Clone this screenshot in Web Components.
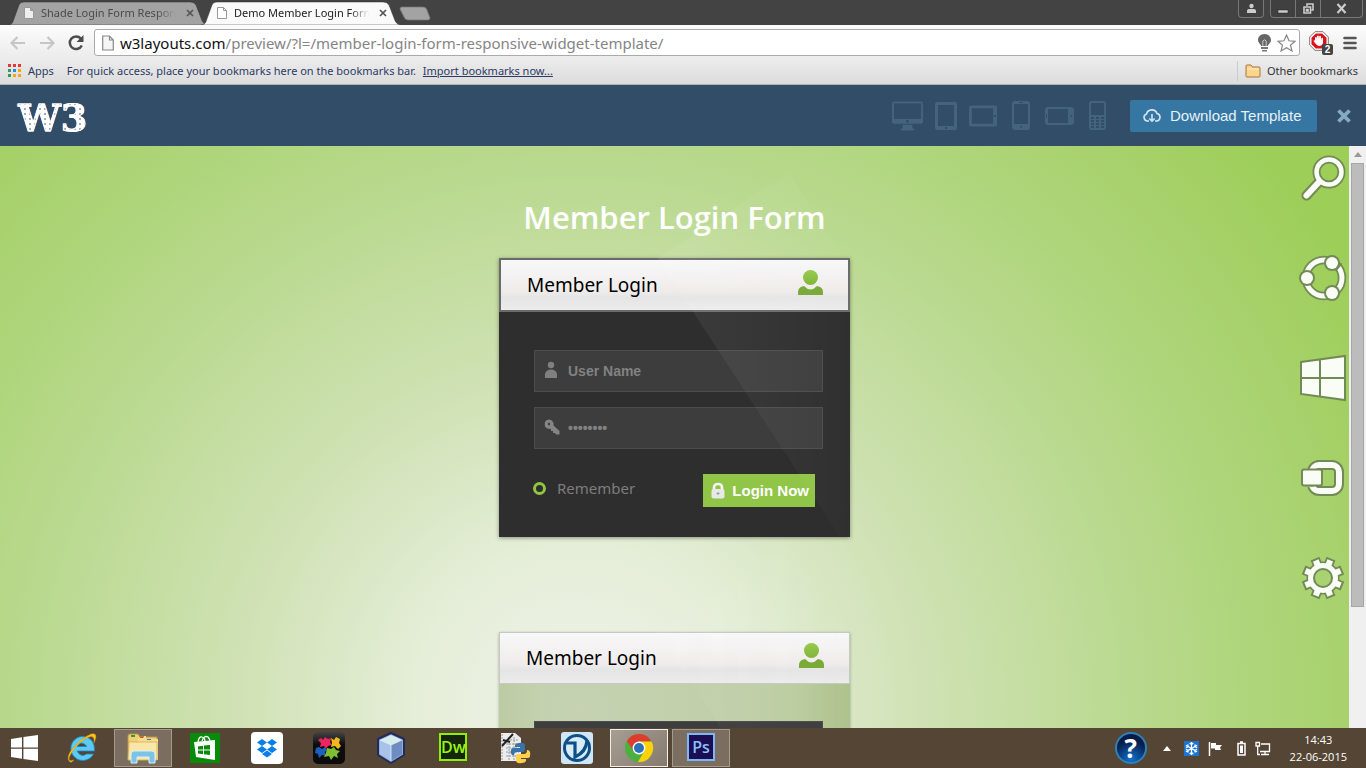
<!DOCTYPE html>
<html lang="en">
<head>
<meta charset="utf-8">
<title>Demo Member Login Form</title>
<style>
html, body { margin: 0; height: 100%; overflow: hidden; }
body { font-family: "Open Sans", "Noto Sans", sans-serif; font-size: 12px; color: #222; }
</style>
</head>
<body>
<desktop-screen></desktop-screen>
<script>
const define = (name, css, html) => {
  const t = document.createElement('template');
  t.innerHTML = `<style>*{box-sizing:border-box}svg{display:block;flex:none}button{font:inherit;border:0;padding:0;margin:0;background:none;color:inherit}a{color:inherit}${css}</style>${html}`;
  customElements.define(name, class extends HTMLElement {
    constructor() {
      super();
      this.attachShadow({ mode: 'open' }).append(t.content.cloneNode(true));
    }
  });
};

define('browser-tab', `
:host { display: flex; position: relative; width: 200px; height: 24px; margin-right: -7px; align-items: center; padding: 0 10px 0 15px; gap: 6px; color: #4a4a4a; --fill: #a3a3a3; --page: #eee; }
:host([active]) { color: #222; --fill: #fafafa; --page: #fff; z-index: 1; }
.shape { position: absolute; inset: 0; width: 100%; height: 100%; }
.shape path { fill: var(--fill); }
.icon, .label, button { position: relative; }
.label { flex: 1; min-width: 0; overflow: hidden; white-space: nowrap; font: 11px/18px "Noto Sans", sans-serif; -webkit-mask-image: linear-gradient(90deg,#000 86%,transparent); mask-image: linear-gradient(90deg,#000 86%,transparent); }
button { width: 16px; height: 16px; display: grid; place-items: center; }
`, `
<svg class="shape" viewBox="0 0 200 24" preserveAspectRatio="none"><path d="M0 24C5 24 5 20 7 15L11 4Q12 1 16 1H182Q186 1 188 4L193 17Q195 24 200 24Z" stroke="#333" stroke-width=".5"/></svg>
<svg class="icon" width="12" height="14" viewBox="0 0 12 14"><path d="M1.500 1.500H7.500L10.500 4.500V12.500H1.500ZM7.500 1.500V4.500H10.500" style="fill:var(--page)" stroke="#999"/></svg>
<span class="label"><slot></slot></span>
<button aria-label="Close tab"><svg width="8" height="8" viewBox="0 0 8 8"><path d="M1 1L7 7M7 1L1 7" stroke="#555" stroke-width="1.700"/></svg></button>
`);

define('tab-strip', `
:host { display: flex; height: 25px; background: #434343; padding-left: 8px; justify-content: space-between; align-items: flex-start; }
.tabs, .controls, .group { display: flex; }
.tabs { padding-top: 1px; }
.new { width: 32px; height: 15px; margin: 5px 0 0 5px; }
.controls { gap: 6px; padding-right: 3px; }
.group { border: 1px solid #777; border-top: 0; border-radius: 0 0 4px 4px; height: 18px; background: #404040; }
.group button { width: 24px; display: grid; place-items: center; }
.group button + button { border-left: 1px solid #777; width: 25px; }
.group .wide.wide { width: 42px; }
`, `
<div class="tabs">
<browser-tab>Shade Login Form Respon</browser-tab>
<browser-tab active>Demo Member Login Form</browser-tab>
<button class="new" aria-label="New tab"><svg width="32" height="15" viewBox="0 0 32 15"><path d="M3 1H24Q27 1 28 4L31 12Q31 14 29 14H9Q6 14 5 11L1 3Q1 1 3 1Z" fill="#a3a3a3" stroke="#777" stroke-width=".7"/></svg></button>
</div>
<div class="controls">
<div class="group"><button aria-label="Profile"><svg width="11" height="11" viewBox="0 0 11 11"><circle cx="5.500" cy="3" r="2.200" fill="#ccc"/><path d="M1 10V8Q1 6 3 6H8Q10 6 10 8V10Z" fill="#ccc"/></svg></button></div>
<div class="group">
<button aria-label="Minimize"><svg width="12" height="12" viewBox="0 0 12 12"><rect x="1" y="7" width="10" height="3" fill="#ccc" stroke="#222" stroke-width=".5"/></svg></button>
<button aria-label="Restore"><svg width="13" height="13" viewBox="0 0 13 13"><path d="M5 4V2H11V8H9.500M2 5H8.500V11H2ZM4.500 7.500H6V9H4.500Z" fill="none" stroke="#ccc" stroke-width="1.600"/></svg></button>
<button class="wide" aria-label="Close"><svg width="11" height="11" viewBox="0 0 11 11"><path d="M1.500 1L9.500 10M9.500 1L1.500 10" stroke="#ccc" stroke-width="2.200"/></svg></button>
</div></div>
`);

define('address-bar', `
:host { display: flex; height: 35px; align-items: center; padding: 0 9px 0 10px; background: linear-gradient(#fcfcfc,#ebebeb); }
.nav { display: flex; gap: 13px; }
.box { flex: 1; display: flex; align-items: center; gap: 6px; height: 27px; border: 1px solid #aaa; border-radius: 3px; background: #fff; padding: 0 3px 0 7px; margin: 0 9px 0 10px; }
.url { flex: 1; font: 15px/22px "Noto Sans", sans-serif; color: #858585; text-decoration: none; white-space: nowrap; }
.url b { font-weight: 400; color: #111; }
.badge { position: relative; width: 24px; height: 24px; }
.badge span { position: absolute; right: 0; bottom: 0; width: 11px; height: 11px; background: #444; color: #fff; font: bold 10px/11px "Liberation Sans", sans-serif; text-align: center; border-radius: 2px; }
.tools { display: flex; gap: 10px; align-items: center; }
`, `
<div class="nav">
<button aria-label="Back"><svg width="16" height="16" viewBox="0 0 16 16"><path d="M15 8H2M7.500 2L1.500 8L7.500 14" fill="none" stroke="#c6c6c6" stroke-width="2.200"/></svg></button>
<button aria-label="Forward"><svg width="16" height="16" viewBox="0 0 16 16"><path d="M1 8H14M8.500 2L14.500 8L8.500 14" fill="none" stroke="#c6c6c6" stroke-width="2.200"/></svg></button>
<button aria-label="Reload"><svg width="16" height="16" viewBox="0 0 16 16"><path d="M12.800 3.500A6.300 6.300 0 1 0 13.800 10.500" fill="none" stroke="#4c4c4c" stroke-width="2.500"/><path d="M15.500 0V7H8.500Z" fill="#4c4c4c"/></svg></button>
</div>
<div class="box">
<svg width="12" height="16" viewBox="0 0 12 16"><path d="M.7 1H7.500L11.300 5V15H.7ZM7.500 1V5H11.300" fill="#f5f5f5" stroke="#888" stroke-width="1.200"/></svg>
<a class="url" href="#"><b>w3layouts.com</b>/preview/?l=/member-login-form-responsive-widget-template/</a>
<svg width="13" height="18" viewBox="0 0 13 18"><path d="M6.500 0C2.500 0 0 3 0 6C0 9 3 10 3 12H10C10 10 13 9 13 6C13 3 10.500 0 6.500 0Z" fill="#666"/><path d="M4.800 12V7Q6.500 4.500 8.200 7V12" fill="none" stroke="#ccc"/><path d="M3 13H10V15H3ZM4 16H9V17.500H4Z" fill="#777"/></svg>
<svg width="19" height="18" viewBox="0 0 19 18"><path d="M9.500 1L12 6.800L18 7.300L13.500 11.200L15 17L9.500 13.800L4 17L5.500 11.200L1 7.300L7 6.800Z" fill="#fff" stroke="#888" stroke-width="1.200"/></svg>
</div>
<div class="tools">
<div class="badge"><svg width="20" height="20" viewBox="0 0 20 20"><path d="M6 .7H14L19.300 6V14L14 19.300H6L.7 14V6Z" fill="#fff" stroke="#777"/><path d="M6.800 2.500H13.200L17.500 6.800V13.200L13.200 17.500H6.800L2.500 13.200V6.800Z" fill="#d9141c"/><path d="M6 9.500V6.500Q7 5.500 7.700 6.500V9L8 5Q9 4 9.800 5V8.500L10.300 5Q11.500 4.500 12 5.500V9L12.500 7Q13.500 6.500 14 7.500V12Q13 15 10 15Q8 15 6 12L4.500 10Q5 9 6 9.500Z" fill="#fff"/></svg><span>2</span></div>
<button aria-label="Menu"><svg width="14" height="14" viewBox="0 0 14 14"><path d="M1.500 2H12.500M1.500 7H12.500M1.500 12H12.500" stroke="#555" stroke-width="2.600" stroke-linecap="round"/></svg></button>
</div>
`);

define('bookmarks-bar', `
:host { display: flex; height: 25px; align-items: center; padding: 0 8px 3px; gap: 13px; background: linear-gradient(#ebebeb,#dcdcdc); border-bottom: 1px solid #b3b3b3; color: #2b3a63; font: 11px/16px "Noto Sans", sans-serif; white-space: nowrap; }
.item { display: flex; gap: 7px; align-items: center; text-decoration: none; }
.hint { flex: 1; }
.hint a { margin-left: 4px; }
.other { border-left: 1px solid #c2cdd9; padding-left: 7px; color: #333; height: 20px; gap: 6px; }
`, `
<a class="item" href="#"><svg width="13" height="13" viewBox="0 0 13 13"><g fill="#e53935"><path d="M0 0h3v3H0zM5 0h3v3H5zM10 0h3v3h-3z"/></g><path d="M0 5h3v3H0zM0 10h3v3H0z" fill="#28a058"/><path d="M5 5h3v3H5z" fill="#2f86f3"/><path d="M10 5h3v3h-3zM5 10h3v3H5zM10 10h3v3h-3z" fill="#f6a70b"/></svg>Apps</a>
<div class="hint">For quick access, place your bookmarks here on the bookmarks bar. <a href="#">Import bookmarks now...</a></div>
<a class="item other" href="#"><svg width="16" height="14" viewBox="0 0 16 14"><path d="M1 3V2Q1 1 2 1H6L7.500 3H14Q15 3 15 4V12Q15 13 14 13H2Q1 13 1 12Z" fill="#fbd58c" stroke="#a8743a"/><path d="M2 5H14" stroke="#fff0c4"/></svg>Other bookmarks</a>
`);

define('preview-bar', `
:host { display: flex; height: 61px; align-items: center; background: #324d67; padding: 0 14px 0 18px; color: #44637d; }
.logo { margin-right: auto; text-decoration: none; font: bold 38px/44px "DejaVu Serif", serif; color: transparent; background: radial-gradient(circle at 2px 2px,#9fadba 0 1px,transparent 1px) 0 0/5px 5px, #fff; -webkit-background-clip: text; background-clip: text; padding-top: 4px; -webkit-text-stroke: 1px #fff; }
.devices { display: flex; gap: 12px; align-items: center; margin-right: 24px; }
.dl { display: flex; align-items: center; gap: 9px; width: 187px; height: 32px; padding-left: 13px; background: #3576a3; border-radius: 2px; color: #e6f1f8; font: 15px/20px "Liberation Sans", sans-serif; text-decoration: none; margin-right: 19px; }
svg { fill: currentColor; }
.hole { fill: #324d67; }
.phone { margin-left: 3px; }
`, `
<a class="logo" href="#">W3</a>
<div class="devices">
<svg width="31" height="30" viewBox="0 0 32 30"><rect width="32" height="23" rx="2"/><rect class="hole" x="2" y="2" width="28" height="16"/><circle class="hole" cx="16" cy="20.500" r="1.500"/><path d="M11 24H21V28H23V30H9V28H11Z"/></svg>
<svg width="22" height="28" viewBox="0 0 22 28"><rect width="22" height="28" rx="2"/><rect class="hole" x="3" y="3" width="16" height="21"/><rect class="hole" x="10" y="25" width="2" height="2"/></svg>
<svg width="28" height="22" viewBox="0 0 29 22"><rect width="29" height="22" rx="2"/><rect class="hole" x="3" y="3" width="22" height="16"/><rect class="hole" x="26" y="10" width="2" height="2"/></svg>
<svg class="phone" width="18" height="29" viewBox="0 0 18 29"><rect width="18" height="29" rx="3"/><rect class="hole" x="2" y="3" width="14" height="20"/><rect class="hole" x="7" y="1" width="4" height="1"/><circle class="hole" cx="9" cy="26" r="1"/></svg>
<svg class="phone" width="29" height="18" viewBox="0 0 29 18"><rect width="29" height="18" rx="3"/><rect class="hole" x="3" y="2" width="20" height="14"/><rect class="hole" x="1" y="7" width="1" height="4"/><circle class="hole" cx="26" cy="9" r="1"/></svg>
<svg class="phone" width="17" height="29" viewBox="0 0 17 29"><rect width="17" height="29" rx="3"/><rect class="hole" x="2" y="2" width="13" height="12"/><path class="hole" d="M2 16h3v2H2zM7 16h3v2H7zM12 16h3v2h-3zM2 19h3v2H2zM7 19h3v2H7zM12 19h3v2h-3zM2 22h3v2H2zM7 22h3v2H7zM12 22h3v2h-3zM2 25h3v2H2zM7 25h3v2H7zM12 25h3v2h-3z"/></svg>
</div>
<a class="dl" href="#"><svg width="18" height="15" viewBox="0 0 18 15" style="fill:none;stroke:#d5e6f2;stroke-width:1.600"><path d="M6 13H4.500A3.600 3.600 0 0 1 3.500 6A5.500 5.500 0 0 1 14 5.500A3.800 3.800 0 0 1 13.500 13H12"/><path d="M9 6V13M6.300 10.500L9 13.200L11.700 10.500"/></svg>Download Template</a>
<button aria-label="Close preview"><svg width="16" height="16" viewBox="0 0 16 16"><path d="M2.500 2.500L13.500 13.500M13.500 2.500L2.500 13.500" stroke="#86aabf" stroke-width="3.800"/></svg></button>
`);

define('login-card', `
:host { display: block; position: relative; width: 351px; box-shadow: 0 1px 4px rgba(0,0,0,.4); --line: #6b6b6b; --lw: 2px; --body: #2e2e2e; }
:host([light]) { --line: #c6c8c4; --lw: 1px; --body: linear-gradient(90deg,rgba(112,142,62,.38),rgba(118,146,72,.34) 12%,rgba(118,146,72,.34) 85%,rgba(112,142,62,.42)); box-shadow: 0 1px 3px rgba(0,0,0,.28); }
header { display: flex; justify-content: space-between; align-items: center; height: 54px; border: var(--lw) solid var(--line); background: linear-gradient(#f8f8f8,#f0ecec 60%,#e5e5e5 75%,#ececec); padding: 0 25px 0 26px; }
:host([light]) header { height: 52px; }
h2 { margin: 0; font: 400 19px/28px "Noto Sans", sans-serif; color: #000; }
header svg { margin-bottom: 4px; }
form { background: var(--body); padding: 38px 27px 30px 35px; display: grid; gap: 15px; }
:host([light]) form { padding-top: 37px; }
.field { display: flex; align-items: center; height: 42px; padding-left: 9px; gap: 8px; background: #3d3d3d; border: 1px solid #4c4c4c; }
.field svg { margin-bottom: 2px; }
.field input { flex: 1; min-width: 0; border: 0; background: none; outline: 0; padding: 0; color: #828282; font: bold 14px/18px "Liberation Sans", sans-serif; }
.row { display: flex; justify-content: space-between; align-items: center; margin-top: 10px; padding-right: 8px; height: 33px; }
:host([light]) .row { visibility: hidden; }
.remember { display: flex; gap: 11px; align-items: center; color: #7d7d7d; font: 15px/20px "Noto Sans", sans-serif; margin-bottom: 5px; }
.remember input { appearance: none; width: 13px; height: 13px; margin: 0 0 0 -1px; border: 3px solid #90c644; border-radius: 50%; }
.go { display: flex; align-items: center; gap: 7px; height: 33px; padding: 0 6px 0 8px; background: #91c548; color: #fff; font: bold 15px/20px "Liberation Sans", sans-serif; white-space: nowrap; }
.shine { position: absolute; left: 0; top: -90px; pointer-events: none; }
:host([light]) .shine { opacity: .6; }
`, `
<header><h2>Member Login</h2>
<svg width="25" height="26" viewBox="0 0 25 26"><defs><linearGradient id="g" x2="0" y2="1"><stop stop-color="#95cb4a"/><stop offset="1" stop-color="#7fb43a"/></linearGradient></defs><circle cx="12.500" cy="7.500" r="7.500" fill="url(#g)"/><path d="M0 25V22Q0 17 6 16Q12.500 23 19 16Q25 17 25 22V25Z" fill="#78a936"/></svg></header>
<form>
<div class="field"><svg width="16" height="18" viewBox="0 0 16 18"><g fill="#808080"><circle cx="7" cy="4" r="3.200"/><path d="M1 17V13Q2 8.500 7 8.500Q12 8.500 13 13V17Z"/></g></svg><input type="text" value="User Name" aria-label="User Name"></div>
<div class="field"><svg width="16" height="16" viewBox="0 0 16 16"><path d="M5 .5A4.700 4.700 0 0 0 4.500 9.800L7 10V12H9V14H11L12 15.500H15.500V12L9.500 6.500A4.800 4.800 0 0 0 5 .5Z" fill="#848484"/><circle cx="5" cy="5" r="1.200" fill="#3d3d3d"/></svg><input type="password" value="password" aria-label="Password"></div>
<div class="row"><label class="remember"><input type="checkbox">Remember</label>
<button class="go" type="button"><svg width="14" height="17" viewBox="0 0 14 17"><path d="M3 8V5.500Q3 2 7 2T11 5.500V8" fill="none" stroke="#f6f6f6" stroke-width="2.600"/><rect x=".5" y="7" width="13" height="9.500" rx="2" fill="#e8e8e8"/><path d="M7 10V13M5.500 11.500H8.500" stroke="#91a97a"/></svg>Login Now</button></div>
</form>
<svg class="shine" width="351" height="369" viewBox="0 0 351 369"><defs><linearGradient id="s" x1="0" x2="1"><stop stop-color="#fff" stop-opacity=".07"/><stop offset="1" stop-color="#fff" stop-opacity="0.010"/></linearGradient></defs><path d="M159 90L290 5L351 100V369H341Z" fill="url(#s)"/></svg>
`);

define('charm-rail', `
:host { display: flex; flex-direction: column; gap: 52px; position: absolute; right: 2px; top: 8px; }
.o { fill: none; stroke: #728a55; stroke-linecap: round; } .w { fill: none; stroke: #fafcf6; stroke-linecap: round; }
.of { fill: #728a55; } .wf { fill: #fafcf6; }
`, `
<button aria-label="Search"><svg width="48" height="48" viewBox="0 0 48 48"><circle class="o" cx="30" cy="18" r="12.500" stroke-width="8"/><path class="o" d="M20 28L7.500 41.500" stroke-width="10"/><path class="w" d="M20 28L7.500 41.500" stroke-width="6"/><circle class="w" cx="30" cy="18" r="12.500" stroke-width="4.500"/></svg></button>
<button aria-label="Share"><svg width="48" height="48" viewBox="0 0 48 48"><circle class="o" cx="25" cy="24" r="18" stroke-width="8.500"/><circle class="w" cx="25" cy="24" r="18" stroke-width="5"/><g class="of"><circle cx="8" cy="24" r="8"/><circle cx="33" cy="9" r="8"/><circle cx="33" cy="39" r="8"/></g><path class="o" d="M37 16L42 10" stroke-width="2"/><g class="wf"><circle cx="8" cy="24" r="6"/><circle cx="33" cy="9" r="6"/><circle cx="33" cy="39" r="6"/></g></svg></button>
<button aria-label="Start"><svg width="48" height="48" viewBox="0 0 48 48"><path d="M2 8L46 2V46L2 40ZM21 5V43M2 24H46" fill="#fafcf6" stroke="#728a55" stroke-width="2"/></svg></button>
<button aria-label="Devices"><svg width="48" height="48" viewBox="0 0 48 48"><rect class="o" x="13" y="11" width="27" height="26" rx="7" stroke-width="10"/><rect class="w" x="13" y="11" width="27" height="26" rx="7" stroke-width="6"/><path d="M7 15H15V33H7Z" fill="#a9d271"/><rect x="3" y="15.500" width="20" height="16" rx="2" fill="#fafcf6" stroke="#728a55" stroke-width="2"/></svg></button>
<button aria-label="Settings"><svg width="48" height="48" viewBox="0 0 48 48"><g transform="rotate(22.500 24 24)"><path d="M24 3V45M3 24H45M9.200 9.200L38.800 38.800M38.800 9.200L9.200 38.800" stroke="#728a55" stroke-width="9.500"/><circle class="of" cx="24" cy="24" r="16.500"/><path d="M24 5V43M5 24H43M10.600 10.600L37.400 37.400M37.400 10.600L10.600 37.400" stroke="#fafcf6" stroke-width="6"/></g><circle class="wf" cx="24" cy="24" r="15"/><circle cx="24" cy="24" r="9" fill="#a9d271" stroke="#728a55" stroke-width="2"/></svg></button>
`);

define('page-view', `
:host { display: flex; flex: 1; min-height: 0; }
main { position: relative; flex: 1; overflow: hidden; display: flex; flex-direction: column; align-items: center; padding-top: 49px;
 background: radial-gradient(ellipse 56% 128% at 43% 97%,#eff3e9 0,#e5eed8 22%,#d0e2b5 45%,#bcda93 70%,#b0d67e 86%,#a9d26f 100%,#9dce58 118%); }
h1 { margin: 0 0 19px; font-size: 31px; line-height: 44px; font-weight: 600; color: #fff; white-space: nowrap; }
login-card { flex: none; margin-bottom: 95px; }
.scroll { width: 17px; background: #f0f0f0; display: flex; flex-direction: column; align-items: center; }
.scroll svg { margin: 6px 0; }
.thumb { width: 13px; height: calc(100% - 138px); background: #bcbcbc; border: 1px solid #a6a6a6; }
`, `
<main><h1>Member Login Form</h1><login-card></login-card><login-card light></login-card><charm-rail></charm-rail></main>
<div class="scroll"><svg width="8" height="5" viewBox="0 0 8 5"><path d="M0 5L4 0L8 5Z" fill="#9a9a9a"/></svg><div class="thumb"></div></div>
`);

define('task-button', `
:host { display: block; width: 58px; height: 38px; }
button { width: 100%; height: 100%; display: grid; place-items: center; border: 1px solid transparent; }
:host([open]) button { background: #7b6e60; border-color: #a39a90; }
:host([active]) button { background: linear-gradient(135deg,#a79e94,#857a6e); border-color: #f2efeb; }
`, `<button><slot></slot></button>`);

define('task-bar', `
:host { display: flex; height: 40px; align-items: center; justify-content: space-between; background: #554534; padding: 0 19px 0 0; color: #fff; }
.apps { display: flex; gap: 4px; align-items: center; }
.start { width: 48px; display: grid; place-items: center; }
.tray { display: flex; align-items: center; }
.tray svg { margin-right: 9px; }
.clock { font-size: 11px; line-height: 17px; text-align: center; margin-left: 10px; }
.app { width: 28px; height: 28px; display: grid; place-items: center; border: 2px solid; font: 600 16px/20px "Open Sans", sans-serif; margin-bottom: 3px; }
.dw { background: #15260c; border-color: #8df000; color: #9bf516; } .ps { background: #1c0e55; border-color: #7db7f5; color: #8bc0f8; }
.help { width: 32px; height: 32px; border-radius: 50%; background: radial-gradient(circle at 50% 90%,#1273cf,#061d4c 65%); border: 2px solid #2f81b8; font: bold 26px/28px "Open Sans", sans-serif; text-align: center; margin-right: 16px; }
`, `
<div class="apps">
<button class="start" aria-label="Start"><svg width="27" height="26" viewBox="0 0 27 26"><path d="M0 4L11 2.300V12.400H0ZM12.400 2.100L27 0V12.400H12.400ZM0 13.700H11V23.700L0 22ZM12.400 13.700H27V26L12.400 23.900Z" fill="#fff"/></svg></button>
<task-button><svg width="32" height="32" viewBox="0 0 32 32"><path d="M17 4.500A12 12 0 1 0 28.500 22H21.500Q16 26 12 19H29.500Q30 5 17 4.500ZM12 14.500Q16.500 7.500 22 14.500Z" fill="#5ccaf5" stroke="#168bc9" stroke-width=".8"/><path d="M5 30Q0 26 8 16T26 2Q34 0 29 11Q30 3 24 5Q14 9 7 20T9 28Q6 31 5 30Z" fill="#fac51c" stroke="#cf9410" stroke-width=".5"/></svg></task-button>
<task-button open><svg width="34" height="32" viewBox="0 0 34 32"><path d="M2 4Q2 2 4 2H12L14 5H31V28H2Z" fill="#f2cf74" stroke="#b99443"/><path d="M5 3H9V5H5Z" fill="#25a047"/><path d="M12 6H18V4H20V7H32V28H12Z" fill="#f8dc8e"/><path d="M14 5H17V6H14Z" fill="#dd4630"/><path d="M21 7H25V8H21Z" fill="#267fd2"/><path d="M3 10H31V28H2Z" fill="#fae6a6" stroke="#c9a64e" stroke-width=".7"/><path d="M5 31V22Q5 19 8 19H26Q29 19 29 22V31H23V25H11V31Z" fill="#7cc3e8" stroke="#d5f1fc"/></svg></task-button>
<task-button><svg width="30" height="30" viewBox="0 0 30 30"><path d="M0 0H30V30H0Z" fill="#078b08"/><path d="M8 9Q9 3 12 4Q15 5 15 8M12 8Q14 2 18 4Q20 6 20 9" fill="none" stroke="#fff" stroke-width="1.300"/><path d="M4 9L25 7V27L6 24Z" fill="#fff"/><path d="M8 13.500L13 12.800V16.500H8ZM14 12.600L20 12V16.500H14ZM8 17.500H13V21.200L8 20.500ZM14 17.500H20V22L14 21.300Z" fill="#078b08"/></svg></task-button>
<task-button><svg width="32" height="32" viewBox="0 0 32 32"><rect width="32" height="32" rx="4" fill="#fff"/><path d="M11 7L16 10.500L11 14L6 10.500ZM21 7L26 10.500L21 14L16 10.500ZM11 14L16 17.500L11 21L6 17.500ZM21 14L26 17.500L21 21L16 17.500ZM11 22L16 18.500L21 22L16 25.500Z" fill="#087ee8"/></svg></task-button>
<task-button><svg width="32" height="32" viewBox="0 0 32 32"><defs><linearGradient id="k" x2="0" y2="1"><stop stop-color="#444"/><stop offset=".4" stop-color="#0c0c0c"/></linearGradient></defs><rect width="32" height="32" rx="5" fill="url(#k)"/><path d="M5 8L8 6L10 8L12 5L15 7L18 6L17 10L19 13L15 14L13 17L11 14L7 15L8 11Z" fill="#ea2560"/><path d="M18 6L21 8L23 5L27 7L26 11L28 14L25 17L22 14L18 15L19 11Z" fill="#f2b91c"/><path d="M3 16L6 15L9 17L12 15L14 18L12 20L13 24L9 23L6 26L5 22L2 21Z" fill="#1d5fbd"/><path d="M14 16L18 17L21 15L23 18L27 19L24 22L25 26L21 24L18 28L16 24L11 25L13 21Z" fill="#7ec02f"/></svg></task-button>
<task-button><svg width="32" height="32" viewBox="0 0 32 32"><path d="M16 1L29 7V23L16 31L3 23V7Z" fill="#8eaedb" stroke="#242a5c" stroke-width="2" stroke-linejoin="round"/><path d="M16 3L27 8L16 13L5 8Z" fill="#d6ecea"/><path d="M5 8L16 13V29L5 22Z" fill="#a8c2ea"/><path d="M27 8L16 13V29L27 22Z" fill="#6d8cc2"/><path d="M16 13V29M5 8L16 13L27 8" stroke="#e6f2fb" stroke-width=".8" fill="none"/></svg></task-button>
<task-button><span class="app dw">Dw</span></task-button>
<task-button><svg width="32" height="32" viewBox="0 0 32 32"><path d="M2 1H16L22 6V29H2Z" fill="#ececec"/><path d="M3 2V29M8 8H20M7 12H20M7 16H20M7 20H20M7 24H20M10 5V28M15 5V28" stroke="#999" stroke-dasharray="2 1"/><path d="M3 14L14 2M4 8L11 10" stroke="#222" stroke-width="2"/><path d="M20 11Q26 10 26 14V18Q26 20 23 20H18Q15 20 15 23H13Q11 21 12 18Q12 16 15 16H21V15H16V13Q17 11 20 11Z" fill="#3a73a8"/><path d="M23 31Q17 32 17 28V24Q17 22 20 22H25Q28 22 28 18H29Q32 19 31 24Q31 26 28 26H22V27H27V29Q26 31 23 31Z" fill="#fcd04a"/></svg></task-button>
<task-button><svg width="32" height="32" viewBox="0 0 32 32"><rect width="32" height="32" rx="3" fill="#cfe6f7"/><circle cx="16" cy="16" r="12.500" fill="#d8ebf8" stroke="#0d4f86" stroke-width="3"/><path d="M6 11H14V25Q25 20 26 9" fill="none" stroke="#0d4f86" stroke-width="3.200"/></svg></task-button>
<task-button active><svg width="30" height="30" viewBox="0 0 30 30"><circle cx="15" cy="15" r="14" fill="#4caf3f"/><path d="M2.900 8A14 14 0 0 1 27.500 8.500H15L9 17Z" fill="#dd3d2e"/><path d="M27.500 8.500A14 14 0 0 1 14 29L20.500 17.500L15 8.500Z" fill="#fbd20b"/><circle cx="15" cy="15" r="6.400" fill="#fff"/><circle cx="15" cy="15" r="5" fill="#2c70b8"/></svg></task-button>
<task-button open><span class="app ps">Ps</span></task-button>
</div>
<div class="tray">
<div class="help">?</div>
<svg width="12" height="5" viewBox="0 0 12 5"><path d="M0 5L4 0L8 5Z" fill="#fff"/></svg>
<svg width="15" height="15" viewBox="0 0 16 16"><rect width="16" height="16" fill="#1974d2"/><path d="M8 1V15M2 4.500L14 11.500M14 4.500L2 11.500M6 2L8 4L10 2M6 14L8 12L10 14M2 7L4.500 6L4 3.500M14 9L11.500 10L12 12.500M14 7L11.500 6L12 3.500M2 9L4.500 10L4 12.500" fill="none" stroke="#fff" stroke-width="1.300"/></svg>
<svg width="20" height="15" viewBox="0 0 20 15"><path d="M1.500 1V15" stroke="#fff" stroke-width="1.500"/><path d="M3 2H8V4H14L12 6.500L13 9H7V7.500H3Z" fill="#fff"/></svg>
<svg width="9" height="15" viewBox="0 0 9 15"><path d="M1 2.500H8V14H1ZM3 1H6" fill="none" stroke="#fff" stroke-width="1.500"/><path d="M3 4.500H6V12H3Z" fill="#fff"/></svg>
<svg width="16" height="15" viewBox="0 0 16 15"><path d="M6 3H14.500V10.500H5M10 11V13.500M6 13.500H14M1 1.500H4.500V5H1ZM2.700 5V13.500H5" fill="none" stroke="#fff" stroke-width="1.300"/></svg>
<div class="clock">14:43<br>22-06-2015</div>
</div>
`);

define('desktop-screen', `:host { display: flex; flex-direction: column; height: 100vh; }`, `
<tab-strip></tab-strip><address-bar></address-bar><bookmarks-bar></bookmarks-bar><preview-bar></preview-bar><page-view></page-view><task-bar></task-bar>
`);
</script>
</body>
</html>
